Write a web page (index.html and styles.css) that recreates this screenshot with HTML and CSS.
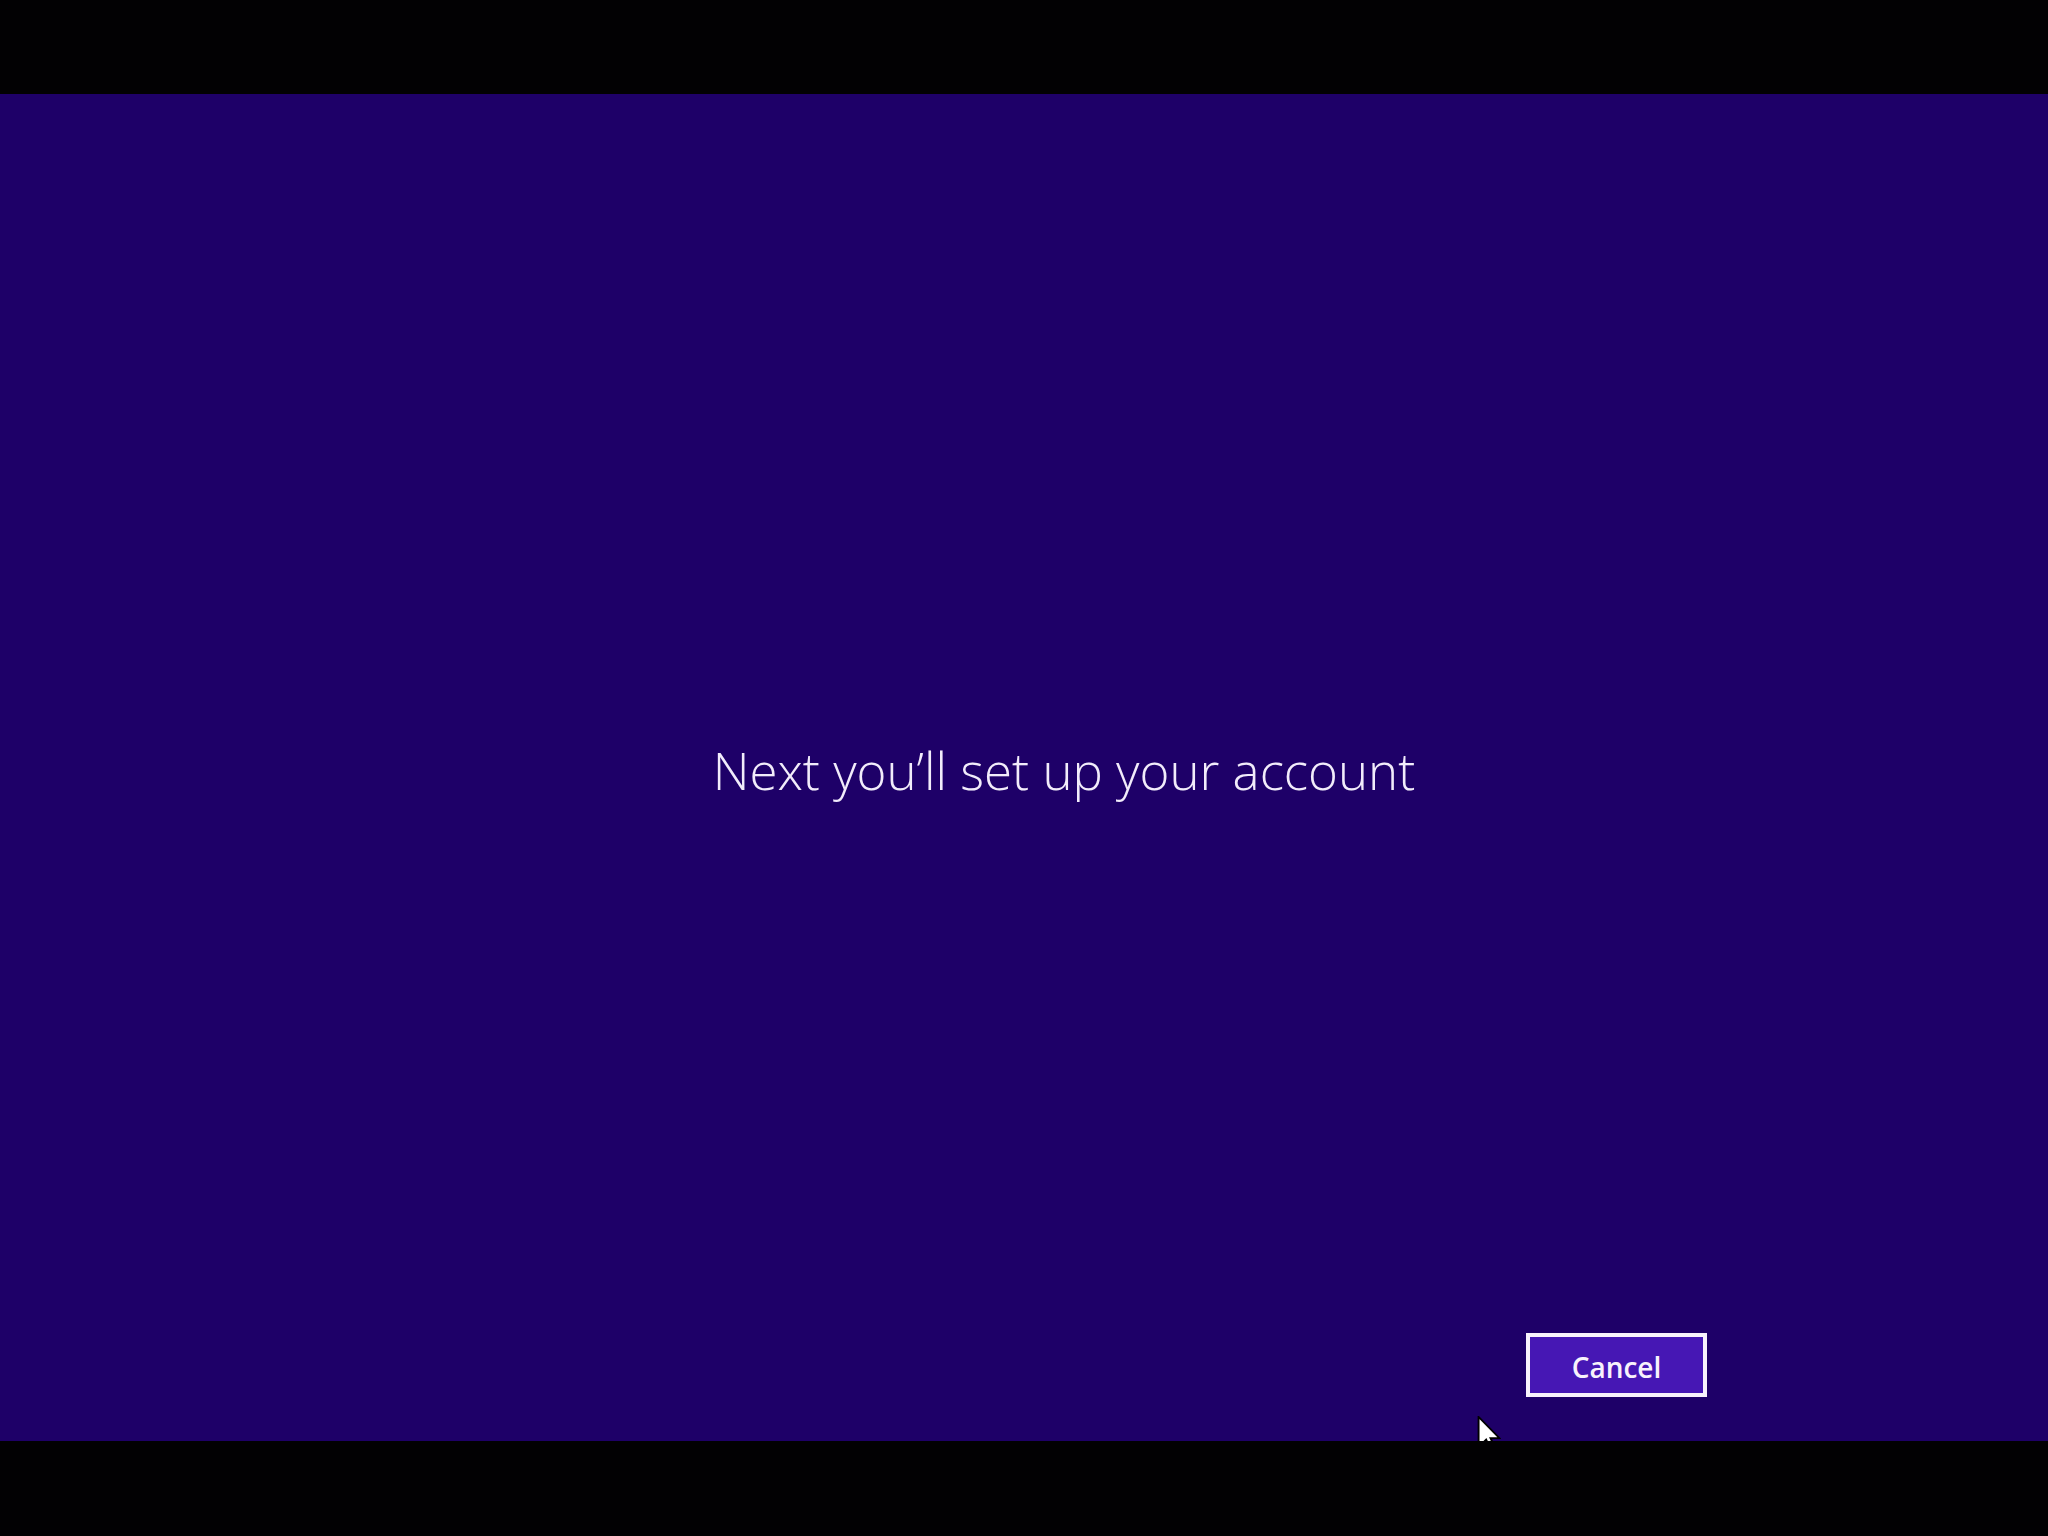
FILE: index.html
```html
<!DOCTYPE html>
<html lang="en">
<head>
<meta charset="utf-8">
<title>Setup</title>
<link rel="stylesheet" href="styles.css">
</head>
<body>
<div class="screen">
  <div class="bar"></div>
  <main class="stage">
    <div class="message">
      <h1 class="title">Next you’ll set up your account</h1>
    </div>
    <div class="footer">
      <button class="btn" type="button">Cancel</button>
    </div>
    <svg class="cursor" width="24" height="36" viewBox="0 0 12 19" aria-hidden="true">
      <path d="M0.5 0.5 L0.5 16.5 L4.5 12.5 L7.3 18.5 L9.5 17.5 L6.8 11.7 L11.5 11.7 Z" fill="#ffffff" stroke="#000000" stroke-width="1"/>
    </svg>
  </main>
  <div class="bar bar-bottom"></div>
</div>
</body>
</html>
```
FILE: styles.css
```css
html, body {
  margin: 0;
  padding: 0;
  background: #020103;
}

.screen {
  width: 2048px;
  height: 1536px;
  display: flex;
  flex-direction: column;
  overflow: hidden;
}

.bar {
  height: 94px;
  background: #020103;
  flex: none;
}

.bar-bottom {
  height: 95px;
  position: relative;
  z-index: 2;
}

.stage {
  position: relative;
  flex: 1;
  background: #1e0068;
  display: flex;
  flex-direction: column;
}

.message {
  flex: 1;
  display: flex;
  align-items: center;
  justify-content: center;
  padding-left: 80px;
  padding-top: 212px;
}

.title {
  margin: 0;
  font-family: "Open Sans", "Lato", "Liberation Sans", sans-serif;
  font-weight: 300;
  font-size: 51px;
  letter-spacing: 0;
  color: #f2ecfb;
}

.footer {
  display: flex;
  justify-content: flex-end;
  padding-right: 341px;
  padding-bottom: 44px;
  padding-top: 100px;
}

.btn {
  width: 181px;
  height: 64px;
  box-sizing: border-box;
  border: 4px solid #f8f2fc;
  background: #4617b4;
  color: #f8f2fc;
  font-family: "Open Sans", "Lato", "Liberation Sans", sans-serif;
  font-weight: 600;
  font-size: 28px;
  padding: 3px 0 0 0;
  cursor: default;
}

.cursor {
  position: absolute;
  left: 1477px;
  top: 1322px;
}
```
